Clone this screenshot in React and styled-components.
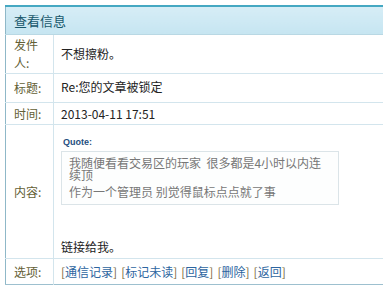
import React from "react";
import styled, { createGlobalStyle } from "styled-components";

const GlobalStyle = createGlobalStyle`
    html, body {
        margin: 0;
        padding: 0;
        background: #fff;
        overflow: hidden;
    }
    body {
        font-family: "Noto Sans CJK SC", "Liberation Sans", sans-serif;
        font-size: 12px;
        color: #222;
    }
`;

const Page = styled.div`
    padding: 5px 0 0 5px;
`;

const Table = styled.table`
    width: 620px;
    border-collapse: collapse;
    border-left: 1px solid #8fb8c8;
    border-bottom: 1px solid #9dc0cf;
    border-top: 2px solid #45a8c2;
`;

const HeadCell = styled.th`
    height: 27px;
    padding: 0 0 0 8px;
    text-align: left;
    font-weight: normal;
    font-size: 13px;
    color: #17576b;
    background: linear-gradient(#d6edf6, #c6e5f1);
    border-bottom: 1px solid #b9d8e4;
`;

const Row = styled.tr`
    height: ${(p) => p.$h}px;
    td {
        border-top: 1px solid #d3e5ed;
    }
`;

const Label = styled.td`
    width: 39px;
    padding: 0 0 0 8px;
    color: #636035;
    border-right: 1px solid #d3e5ed;
    line-height: 18px;
    vertical-align: middle;
`;

const Value = styled.td`
    padding: ${(p) => p.$pad || "0 0 0 7px"};
    vertical-align: ${(p) => p.$valign || "middle"};
    line-height: 16px;
`;

const QuoteTitle = styled.div`
    font-family: "Liberation Sans", sans-serif;
    font-size: 9px;
    font-weight: bold;
    color: #1f4f80;
    line-height: 12px;
    margin-left: 2px;
`;

const QuoteBox = styled.div`
    width: 262px;
    margin-top: 3px;
    padding: 5px 7px 6px 7px;
    border: 1px solid #dbe4e8;
    background: #fdfefe;
    color: #777;
    white-space: pre-wrap;
`;

const QuoteLine = styled.div`
    line-height: 12px;
    & + & {
        margin-top: 5px;
    }
`;

const Reply = styled.div`
    margin-top: 34px;
    line-height: 16px;
`;

const Options = styled.div`
    display: flex;
    gap: 4px;
`;

const Bracket = styled.span`
    color: #7a6a3c;
`;

const Link = styled.a`
    color: #2d65a0;
    text-decoration: none;
    cursor: pointer;
`;

const actions = ["通信记录", "标记未读", "回复", "删除", "返回"];

export default function App() {
    return (
        <Page>
            <GlobalStyle />
            <Table>
                <thead>
                    <tr>
                        <HeadCell colSpan={2}>查看信息</HeadCell>
                    </tr>
                </thead>
                <tbody>
                    <Row $h={39}>
                        <Label>发件人:</Label>
                        <Value>不想擦粉。</Value>
                    </Row>
                    <Row $h={29}>
                        <Label>标题:</Label>
                        <Value $pad="0 0 3px 7px">Re:您的文章被锁定</Value>
                    </Row>
                    <Row $h={22}>
                        <Label>时间:</Label>
                        <Value>2013-04-11 17:51</Value>
                    </Row>
                    <Row $h={134}>
                        <Label>内容:</Label>
                        <Value $valign="top" $pad="11px 0 0 7px">
                            <QuoteTitle>Quote:</QuoteTitle>
                            <QuoteBox>
                                <QuoteLine>我随便看看交易区的玩家  很多都是4小时以内连续顶</QuoteLine>
                                <QuoteLine>作为一个管理员 别觉得鼠标点点就了事</QuoteLine>
                            </QuoteBox>
                            <Reply>链接给我。</Reply>
                        </Value>
                    </Row>
                    <Row $h={26}>
                        <Label>选项:</Label>
                        <Value>
                            <Options>
                                {actions.map((a) => (
                                    <span key={a}>
                                        <Bracket>[</Bracket>
                                        <Link>{a}</Link>
                                        <Bracket>]</Bracket>
                                    </span>
                                ))}
                            </Options>
                        </Value>
                    </Row>
                </tbody>
            </Table>
        </Page>
    );
}
